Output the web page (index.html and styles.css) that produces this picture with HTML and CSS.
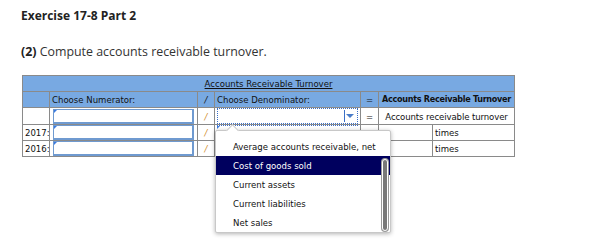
FILE: index.html
```html
<!DOCTYPE html>
<html lang="en">
<head>
  <meta charset="UTF-8"/>
  <title>Exercise 17-8 Part 2</title>
  <link rel="stylesheet" href="styles.css">
</head>
<body>
  <h1>Exercise 17-8 Part 2</h1>
  <p class="question"><strong>(2)</strong> Compute accounts receivable turnover.</p>
  <div class="sheet">
    <table class="ratio">
      <colgroup>
        <col class="c-label"/><col class="c-num"/><col class="c-op"/><col class="c-den"/><col class="c-op2"/><col class="c-val"/><col class="c-unit"/>
      </colgroup>
      <tr class="head">
        <th colspan="7"><u>Accounts Receivable Turnover</u></th>
      </tr>
      <tr class="head">
        <th></th>
        <th class="left">Choose Numerator:</th>
        <th class="op">/</th>
        <th class="left">Choose Denominator:</th>
        <th>=</th>
        <th colspan="2" class="bold">Accounts Receivable Turnover</th>
      </tr>
      <tr>
        <td></td>
        <td class="in"><div class="box"></div></td>
        <td class="slash">/</td>
        <td class="in"><div class="select"><span class="arrow"></span></div></td>
        <td class="eq">=</td>
        <td colspan="2" class="center">Accounts receivable turnover</td>
      </tr>
      <tr>
        <td class="year">2017:</td>
        <td class="in"><div class="box"></div></td>
        <td class="slash">/</td>
        <td class="in"><div class="focus"></div></td>
        <td class="eq">=</td>
        <td></td>
        <td class="unit">times</td>
      </tr>
      <tr>
        <td class="year">2016:</td>
        <td class="in"><div class="box"></div></td>
        <td class="slash">/</td>
        <td class="in"></td>
        <td class="eq"></td>
        <td></td>
        <td class="unit">times</td>
      </tr>
    </table>
    <div class="menu">
      <div class="item">Average accounts receivable, net</div>
      <div class="item sel">Cost of goods sold</div>
      <div class="item">Current assets</div>
      <div class="item">Current liabilities</div>
      <div class="item">Net sales</div>
      <div class="scroll"></div>
    </div>
  </div>
</body>
</html>
```

FILE: styles.css
```css
html,body{min-height:247px;}
body{margin:0;padding:8px 21px;box-sizing:border-box;font-family:"Open Sans",Arial,sans-serif;color:#222;background:#fff;}
h1{font-size:12px;font-weight:bold;margin:0 0 20px;line-height:16px;}
.question{font-size:12.4px;margin:0 0 15px;line-height:16px;color:#333;}
.question strong{color:#222;}
.sheet{position:relative;width:493px;margin-left:1px;}
.ratio{border-collapse:collapse;table-layout:fixed;width:492px;font-family:"DejaVu Sans Condensed","DejaVu Sans",sans-serif;font-size:9.5px;color:#111;}
.c-label{width:27px;}.c-num{width:148px;}.c-op{width:17px;}.c-den{width:146px;}.c-op2{width:18px;}.c-val{width:54px;}.c-unit{width:82px;}
.ratio th,.ratio td{border:1px solid #8a8a8a;height:15px;padding:0 2px;line-height:15px;white-space:nowrap;overflow:hidden;}
.head th{background:#78a9e2;font-weight:normal;text-align:center;}
.head th.left{text-align:left;}
.head th.bold{font-weight:bold;font-size:9px;letter-spacing:-0.3px;padding:0;}
.head th.op{font-style:italic;}
.center{text-align:center;letter-spacing:-0.1px;}
.eq{text-align:center;}
.slash{text-align:center;color:#d08a2a;font-style:italic;}
.year{text-align:right;padding:0 1px;}
.unit{text-align:left;}
.in{padding:0;}
.box{height:12px;margin:0 1px;border:1px solid #6f9ad0;border-width:1px 2px 2px 1px;background:#fff;position:relative;}
.box::before,.focus::before{content:"";position:absolute;left:0;top:0;border-top:3px solid #3b7be0;border-right:3px solid transparent;}
.select{height:14px;border:1px dotted #3b6fc6;position:relative;}
.select::after{content:"";position:absolute;right:12px;top:1px;bottom:1px;border-left:1px solid #3b6fc6;}
.arrow{position:absolute;right:3px;top:5px;border-top:4px solid #4a7cc8;border-left:4px solid transparent;border-right:4px solid transparent;}
.focus{position:relative;height:15px;border-top:1px dotted #3b6fc6;box-sizing:border-box;}
.menu{position:absolute;left:193px;top:55px;width:176px;height:103px;background:#fff;border:1px solid #c8c8c8;border-radius:2px;box-shadow:0 1px 4px rgba(0,0,0,0.3);z-index:5;padding-top:6px;box-sizing:border-box;overflow:visible;font-family:"DejaVu Sans Condensed","DejaVu Sans",sans-serif;font-size:9.5px;}
.menu::before{content:"";position:absolute;left:12px;top:-5px;width:8px;height:8px;background:#fff;border-left:1px solid #c8c8c8;border-top:1px solid #c8c8c8;transform:rotate(45deg);}
.item{height:19px;line-height:19px;padding-left:17px;color:#111;position:relative;}
.item.sel{background:#00005e;color:#fff;}
.scroll{position:absolute;right:2px;top:28px;bottom:1px;width:4px;background:#787878;border:1px solid #fff;border-radius:3px;box-shadow:0 0 0 1px #999;}
```
